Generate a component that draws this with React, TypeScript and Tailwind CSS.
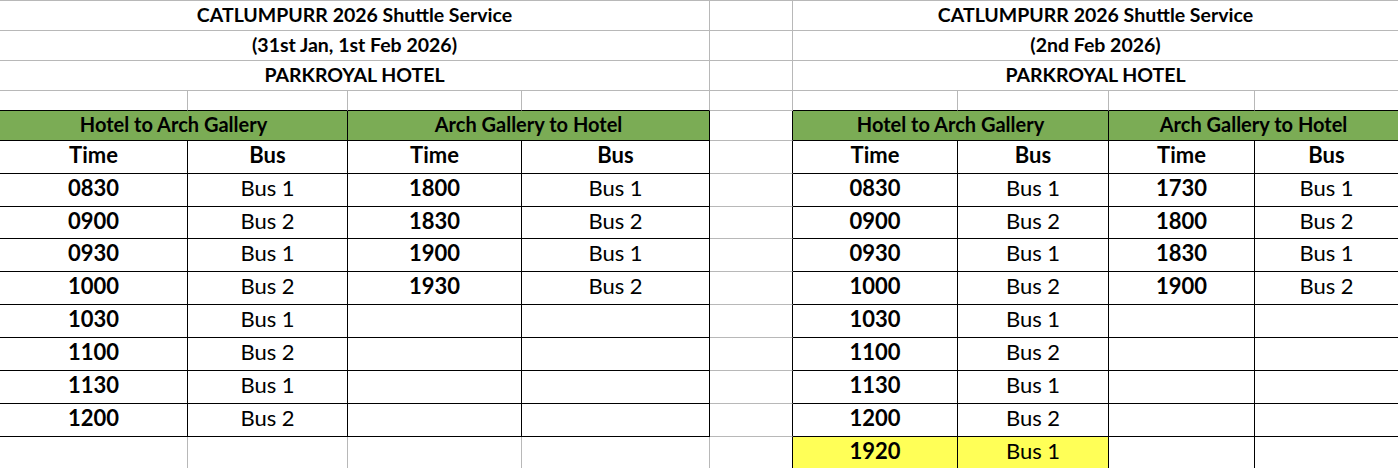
import type { ReactNode } from "react";

type Trip = [string, string];

type Side = {
  date: string;
  outbound: Trip[];
  inbound: Trip[];
  extra?: Trip;
};

const outbound: Trip[] = [
  ["0830", "Bus 1"],
  ["0900", "Bus 2"],
  ["0930", "Bus 1"],
  ["1000", "Bus 2"],
  ["1030", "Bus 1"],
  ["1100", "Bus 2"],
  ["1130", "Bus 1"],
  ["1200", "Bus 2"],
];

const sides: Side[] = [
  {
    date: "(31st Jan, 1st Feb 2026)",
    outbound,
    inbound: [
      ["1800", "Bus 1"],
      ["1830", "Bus 2"],
      ["1900", "Bus 1"],
      ["1930", "Bus 2"],
    ],
  },
  {
    date: "(2nd Feb 2026)",
    outbound,
    inbound: [
      ["1730", "Bus 1"],
      ["1800", "Bus 2"],
      ["1830", "Bus 1"],
      ["1900", "Bus 2"],
    ],
    extra: ["1920", "Bus 1"],
  },
];

function Cell({
  r,
  b,
  top,
  className = "",
  children,
}: {
  r?: boolean;
  b?: boolean;
  top?: boolean;
  className?: string;
  children?: ReactNode;
}) {
  return (
    <div
      className={`flex items-center justify-center overflow-hidden whitespace-nowrap border-r border-b text-black ${
        r ? "border-r-black" : "border-r-[#b8b8b8]"
      } ${b ? "border-b-black" : "border-b-[#b8b8b8]"} ${
        top ? "border-t border-t-[#b8b8b8]" : ""
      } ${className}`}
    >
      {children}
    </div>
  );
}

const title = "text-[19.5px] font-bold leading-none pb-[2px]";
const green = "text-[20px] font-bold leading-none pb-[3px]";
const big = "text-[22px] leading-none pb-[4px]";

// one row of one side (4 columns), by row index
function sideRow(side: Side, row: number, right: boolean): ReactNode[] {
  const k = (i: number) => `${right ? "r" : "l"}-${row}-${i}`;
  if (row < 3) {
    const text = ["CATLUMPURR 2026 Shuttle Service", side.date, "PARKROYAL HOTEL"][row];
    return [
      <Cell key={k(0)} top={row === 0} className={`col-span-4 ${title}`}>
        {text}
      </Cell>,
    ];
  }
  if (row === 3) {
    return [0, 1, 2, 3].map((i) => <Cell key={k(i)} b />);
  }
  if (row === 4) {
    return ["Hotel to Arch Gallery", "Arch Gallery to Hotel"].map((t, i) => (
      <Cell key={k(i)} r b className={`col-span-2 bg-[#7bac55] ${green}`}>
        {t}
      </Cell>
    ));
  }
  if (row === 5) {
    return ["Time", "Bus", "Time", "Bus"].map((t, i) => (
      <Cell key={k(i)} r b className={`${big} font-bold`}>
        {t}
      </Cell>
    ));
  }
  const idx = row - 6;
  const out = idx < 8 ? side.outbound[idx] : side.extra;
  const back = side.inbound[idx];
  const edge = idx < 8 || right;
  const yellow = idx === 8 && side.extra ? "bg-[#ffff57]" : "";
  return [
    <Cell key={k(0)} r={edge} b={edge} className={`${big} font-bold ${yellow}`}>
      {out?.[0]}
    </Cell>,
    <Cell key={k(1)} r={edge} b={edge} className={`${big} ${yellow}`}>
      {out?.[1]}
    </Cell>,
    <Cell key={k(2)} r={edge} b={edge} className={`${big} font-bold`}>
      {back?.[0]}
    </Cell>,
    <Cell key={k(3)} r={edge} b={edge} className={big}>
      {back?.[1]}
    </Cell>,
  ];
}

export default function App() {
  const rows = Array.from({ length: 15 }, (_, i) => i);
  return (
    <div className="h-[468px] w-[1398px] overflow-hidden bg-white [font-family:Lato,sans-serif]">
      <div className="grid grid-cols-[188px_160px_174px_188px_83px_165px_151px_146px_144px] grid-rows-[31px_30px_30px_20px_30px_33px_33px_32px_33px_33px_33px_33px_33px_33px_32px]">
        {rows.map((row) => [
          ...sideRow(sides[0], row, false),
          <Cell key={`s-${row}`} top={row === 0} r={row >= 4} />,
          ...sideRow(sides[1], row, true),
        ])}
      </div>
    </div>
  );
}
